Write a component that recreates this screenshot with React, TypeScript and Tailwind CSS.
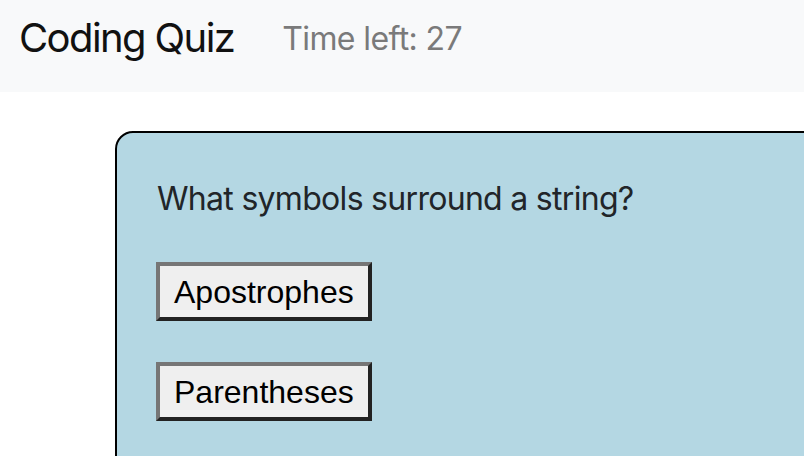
import * as React from "react";

const answers = ["Apostrophes", "Parentheses"];

export default function App() {
  return (
    <div className="w-[804px] h-[456px] overflow-hidden bg-white font-['Inter',sans-serif] text-[#212529]">
      <nav className="h-[92px] bg-[#f8f9fa] flex items-start pt-[14px] pl-[19px]">
        <span className="text-[40px] leading-[48px] text-[#111] tracking-[-1.6px]">Coding Quiz</span>
        <span className="ml-[48px] mt-[6px] text-[32px] leading-[38px] text-[#7a7a7a] tracking-[-0.6px]">Time left: 27</span>
      </nav>
      <main className="pt-[39px] pl-[115px]">
        <div className="w-[720px] h-[400px] bg-[#b4d7e3] border-2 border-black rounded-tl-[18px] rounded-tr-[18px] pl-[39px] pt-[46px]">
          <p className="ml-[1px] text-[32px] leading-[40px] tracking-[-0.7px]">What symbols surround a string?</p>
          <div className="mt-[43px] flex flex-col items-start gap-[41px]">
            {answers.map((a) => (
              <button
                key={a}
                type="button"
                className="h-[59px] px-[14px] bg-[#efefef] border-[4px] border-t-[#767676] border-l-[#767676] border-r-[#222] border-b-[#222] font-['Liberation_Sans',sans-serif] text-[32px] leading-[40px] text-black"
              >
                {a}
              </button>
            ))}
          </div>
        </div>
      </main>
    </div>
  );
}
